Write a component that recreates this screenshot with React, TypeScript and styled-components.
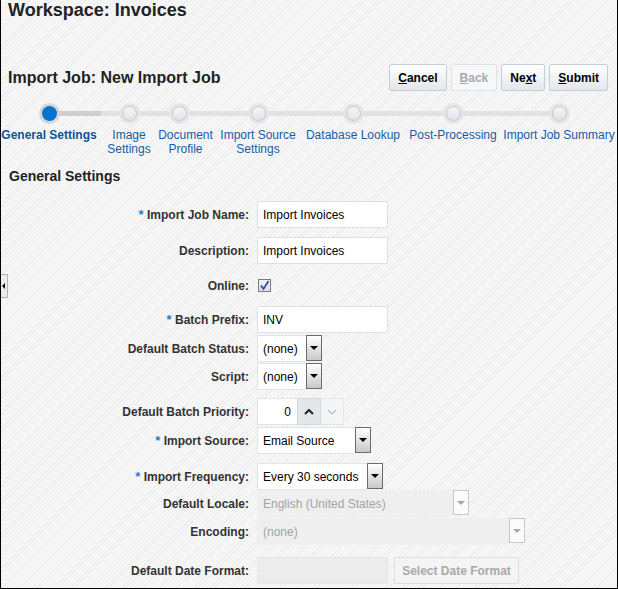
import styled, { createGlobalStyle } from "styled-components";

const GlobalStyle = createGlobalStyle`
  html, body {
    margin: 0;
    padding: 0;
    background: #ffffff;
  }
  * {
    box-sizing: border-box;
  }
`;

const steps = [
  { lines: ["General Settings"], width: 94, left: 1, current: true },
  { lines: ["Image", "Settings"], width: 44, left: 11 },
  { lines: ["Document", "Profile"], width: 57, left: 6, shift: -6 },
  { lines: ["Import Source", "Settings"], width: 74, left: 7 },
  { lines: ["Database Lookup"], width: 98, left: 9 },
  { lines: ["Post-Processing"], width: 92, left: 5 },
  { lines: ["Import Job Summary"], width: 114, left: 3 },
];

export default function App() {
  return (
    <>
      <GlobalStyle />
      <Page>
        <Handle />
        <Title>Workspace: Invoices</Title>

        <HeaderRow>
          <JobTitle>Import Job: New Import Job</JobTitle>
          <Buttons>
            <ToolButton>
              <u>C</u>ancel
            </ToolButton>
            <ToolButton disabled>
              <u>B</u>ack
            </ToolButton>
            <ToolButton>
              Ne<u>x</u>t
            </ToolButton>
            <ToolButton>
              <u>S</u>ubmit
            </ToolButton>
          </Buttons>
        </HeaderRow>

        <Train>
          {steps.map((s) => (
            <Step key={s.lines.join(" ")} $width={s.width} $left={s.left}>
              <Dot $current={s.current} $shift={s.shift ?? 0} />
              <StepLabel $current={s.current}>
                {s.lines.map((l) => (
                  <StepLine key={l}>{l}</StepLine>
                ))}
              </StepLabel>
            </Step>
          ))}
        </Train>

        <SectionTitle>General Settings</SectionTitle>

        <Form>
          <Row $top={17}>
            <Label>
              <Req>*</Req> Import Job Name:
            </Label>
            <TextBox>Import Invoices</TextBox>
          </Row>
          <Row $top={9}>
            <Label>Description:</Label>
            <TextBox>Import Invoices</TextBox>
          </Row>
          <Row $top={5} $height={33}>
            <Label>Online:</Label>
            <Check>
              <svg width="11" height="11" viewBox="0 0 11 11">
                <path d="M2 5.5 L4.5 9 L9.5 1" fill="none" stroke="#2f4fa8" strokeWidth="1.8" />
              </svg>
            </Check>
          </Row>
          <Row $top={4}>
            <Label>
              <Req>*</Req> Batch Prefix:
            </Label>
            <TextBox>INV</TextBox>
          </Row>
          <Row $top={2}>
            <Label>Default Batch Status:</Label>
            <Select>
              <SelectText $width={49}>(none)</SelectText>
              <DropButton />
            </Select>
          </Row>
          <Row $top={1}>
            <Label>Script:</Label>
            <Select>
              <SelectText $width={49}>(none)</SelectText>
              <DropButton />
            </Select>
          </Row>
          <Row $top={8}>
            <Label>Default Batch Priority:</Label>
            <Spinner>
              <SpinValue>0</SpinValue>
              <SpinButton $active>
                <svg width="10" height="6" viewBox="0 0 10 6">
                  <path d="M1 5 L5 1 L9 5" fill="none" stroke="#222" strokeWidth="2" />
                </svg>
              </SpinButton>
              <SpinButton>
                <svg width="10" height="6" viewBox="0 0 10 6">
                  <path d="M1 1 L5 5 L9 1" fill="none" stroke="#c4c4c4" strokeWidth="1.5" />
                </svg>
              </SpinButton>
            </Spinner>
          </Row>
          <Row $top={2}>
            <Label>
              <Req>*</Req> Import Source:
            </Label>
            <Select>
              <SelectText $width={98}>Email Source</SelectText>
              <DropButton />
            </Select>
          </Row>
          <Row $top={9}>
            <Label>
              <Req>*</Req> Import Frequency:
            </Label>
            <Select>
              <SelectText $width={110}>Every 30 seconds</SelectText>
              <DropButton />
            </Select>
          </Row>
          <Row $top={0}>
            <Label>Default Locale:</Label>
            <Select>
              <SelectText $width={196} $disabled>
                English (United States)
              </SelectText>
              <DropButton $disabled />
            </Select>
          </Row>
          <Row $top={1}>
            <Label>Encoding:</Label>
            <Select>
              <SelectText $width={252} $disabled>
                (none)
              </SelectText>
              <DropButton $disabled />
            </Select>
          </Row>
          <Row $top={12}>
            <Label>Default Date Format:</Label>
            <Inline>
              <TextBox $disabled />
              <PlainButton disabled>Select Date Format</PlainButton>
            </Inline>
          </Row>
        </Form>
      </Page>
    </>
  );
}

const Page = styled.div`
  position: relative;
  width: 618px;
  height: 589px;
  overflow: hidden;

  border-left: 1px solid #000;
  border-right: 1px solid #000;
  border-bottom: 1px solid #000;

  font-family: "Liberation Sans", Arial, sans-serif;
  color: #333;
  background: repeating-linear-gradient(
    -45deg,
    #f8f8f8 0px,
    #f8f8f8 2px,
    #ececec 2px,
    #ececec 3px
  );
`;

const Handle = styled.div`
  position: absolute;
  left: 0;
  top: 274px;
  width: 7px;
  height: 24px;

  background: #ececec;
  border: 1px solid #b5b5b5;
  border-left: none;

  &::after {
    content: "";
    position: absolute;
    left: 1px;
    top: 8px;
    border-top: 3px solid transparent;
    border-bottom: 3px solid transparent;
    border-right: 3px solid #000;
  }
`;

const Title = styled.h1`
  margin: 0;
  padding-left: 7px;

  font-size: 18px;
  line-height: 20px;
  font-weight: bold;
  color: #222;
`;

const HeaderRow = styled.div`
  display: flex;
  justify-content: space-between;
  align-items: center;

  margin-top: 44px;
  padding: 0 9px 0 7px;
  height: 27px;
`;

const JobTitle = styled.h2`
  margin: 0;

  font-size: 16px;
  line-height: 27px;
  font-weight: bold;
  color: #222;
`;

const Buttons = styled.div`
  display: flex;
  gap: 4px;
`;

const ToolButton = styled.button`
  height: 27px;
  padding: 0 8px;

  font-family: "Liberation Sans", Arial, sans-serif;
  font-size: 12px;
  font-weight: bold;
  color: #000;

  background: linear-gradient(#ffffff, #e3e7ea);
  border: 1px solid #c5ced6;
  border-radius: 2px;

  &:disabled {
    color: #a9a9a9;
    background: #f6f7f8;
    border-color: #dfe3e7;
  }
`;

const Train = styled.div`
  position: relative;
  display: flex;
  align-items: flex-start;
  padding-top: 12px;

  &::before {
    content: "";
    position: absolute;
    left: 47px;
    top: 20px;
    width: 511px;
    height: 5px;
    background: #e2e2e2;
  }

  &::after {
    content: "";
    position: absolute;
    left: 47px;
    top: 20px;
    width: 53px;
    height: 5px;
    background: #cecece;
  }
`;

const Step = styled.div<{ $width: number; $left: number }>`
  position: relative;
  z-index: 1;
  display: flex;
  flex-direction: column;
  align-items: center;

  width: ${(p) => p.$width}px;
  margin-left: ${(p) => p.$left}px;
`;

const Dot = styled.div<{ $current?: boolean; $shift: number }>`
  flex-shrink: 0;
  width: 21px;
  height: 21px;
  border-radius: 50%;
  transform: translateX(${(p) => p.$shift}px);
  background: ${(p) => (p.$current ? "#d6d6d6" : "#e6e6e6")};
  display: flex;
  align-items: center;
  justify-content: center;

  &::after {
    content: "";
    width: 15px;
    height: 15px;
    border-radius: 50%;
    box-sizing: border-box;
    ${(p) =>
      p.$current
        ? "background: #0572ce;"
        : "background: linear-gradient(#f4f6f8, #e0e4e8); border: 1px solid #c2c8ce;"}
  }
`;

const StepLabel = styled.div<{ $current?: boolean }>`
  display: flex;
  flex-direction: column;
  align-items: center;
  margin-top: 4px;
  width: 100%;

  font-size: 12px;
  line-height: 14px;
  font-weight: ${(p) => (p.$current ? "bold" : "normal")};
  color: ${(p) => (p.$current ? "#0f5497" : "#145ea8")};
`;

const StepLine = styled.span`
  white-space: nowrap;
`;

const SectionTitle = styled.h3`
  margin: 12px 0 0;
  padding-left: 8px;

  font-size: 14px;
  line-height: 16px;
  font-weight: bold;
  color: #222;
`;

const Form = styled.div`
  display: flex;
  flex-direction: column;
`;

const Row = styled.div<{ $top: number; $height?: number }>`
  display: grid;
  grid-template-columns: 248px auto;
  column-gap: 8px;
  align-items: center;

  margin-top: ${(p) => p.$top}px;
  height: ${(p) => p.$height ?? 27}px;
`;

const Label = styled.label`
  text-align: right;
  white-space: nowrap;

  font-size: 12px;
  font-weight: bold;
  color: #333;
`;

const Req = styled.span`
  color: #2e78c7;
  font-size: 13px;
`;

const TextBox = styled.div<{ $disabled?: boolean }>`
  display: flex;
  align-items: center;

  width: 131px;
  height: 27px;
  padding: 0 5px;

  font-size: 12px;
  color: #000;

  background: ${(p) => (p.$disabled ? "#ececec" : "#fff")};
  border: 1px solid ${(p) => (p.$disabled ? "#e6e6e6" : "#dde1e4")};
  border-radius: 1px;
`;

const Check = styled.div`
  display: flex;
  align-items: center;
  justify-content: center;

  width: 13px;
  height: 13px;
  margin-left: 1px;

  background: linear-gradient(#eef1f5, #d9dee5);
  border: 1px solid #7d7d7d;
`;

const Select = styled.div`
  display: flex;
  height: 27px;
`;

const SelectText = styled.div<{ $width: number; $disabled?: boolean }>`
  display: flex;
  align-items: center;

  width: ${(p) => p.$width}px;
  padding-left: 5px;

  font-size: 12px;
  white-space: nowrap;
  color: ${(p) => (p.$disabled ? "#a3a3a3" : "#000")};

  background: ${(p) => (p.$disabled ? "#efefef" : "#fff")};
  border: 1px solid ${(p) => (p.$disabled ? "#efefef" : "#e2e5e8")};
  border-right: none;
`;

const DropButton = styled.div<{ $disabled?: boolean }>`
  position: relative;
  width: 16px;
  height: ${(p) => (p.$disabled ? 25 : 26)}px;

  background: ${(p) =>
    p.$disabled ? "#fbfbfb" : "linear-gradient(#ffffff, #c9c9c9)"};
  border: 1px solid ${(p) => (p.$disabled ? "#c8c8c8" : "#6b6b6b")};

  &::after {
    content: "";
    position: absolute;
    left: 3px;
    top: 10px;
    border-left: 4px solid transparent;
    border-right: 4px solid transparent;
    border-top: 4px solid ${(p) => (p.$disabled ? "#a8a8a8" : "#000")};
  }
`;

const Spinner = styled.div`
  display: flex;
  height: 27px;
`;

const SpinValue = styled.div`
  display: flex;
  align-items: center;
  justify-content: flex-end;

  width: 40px;
  padding-right: 6px;

  font-size: 12px;
  color: #000;

  background: #fff;
  border: 1px solid #e2e5e8;
  border-right: none;
`;

const SpinButton = styled.div<{ $active?: boolean }>`
  display: flex;
  align-items: center;
  justify-content: center;

  width: ${(p) => (p.$active ? 24 : 23)}px;

  background: ${(p) => (p.$active ? "#e4e7ea" : "#f4f5f6")};
  border: 1px solid ${(p) => (p.$active ? "#d3d8dc" : "#e4e7ea")};
  border-left: ${(p) => (p.$active ? "1px solid #d3d8dc" : "none")};
`;

const Inline = styled.div`
  display: flex;
  gap: 6px;
`;

const PlainButton = styled.button`
  width: 125px;
  height: 27px;
  padding: 0;

  font-family: "Liberation Sans", Arial, sans-serif;
  font-size: 12px;
  font-weight: bold;
  color: #a9a9a9;

  background: #f4f4f4;
  border: 1px solid #dedede;
  border-radius: 1px;
`;
